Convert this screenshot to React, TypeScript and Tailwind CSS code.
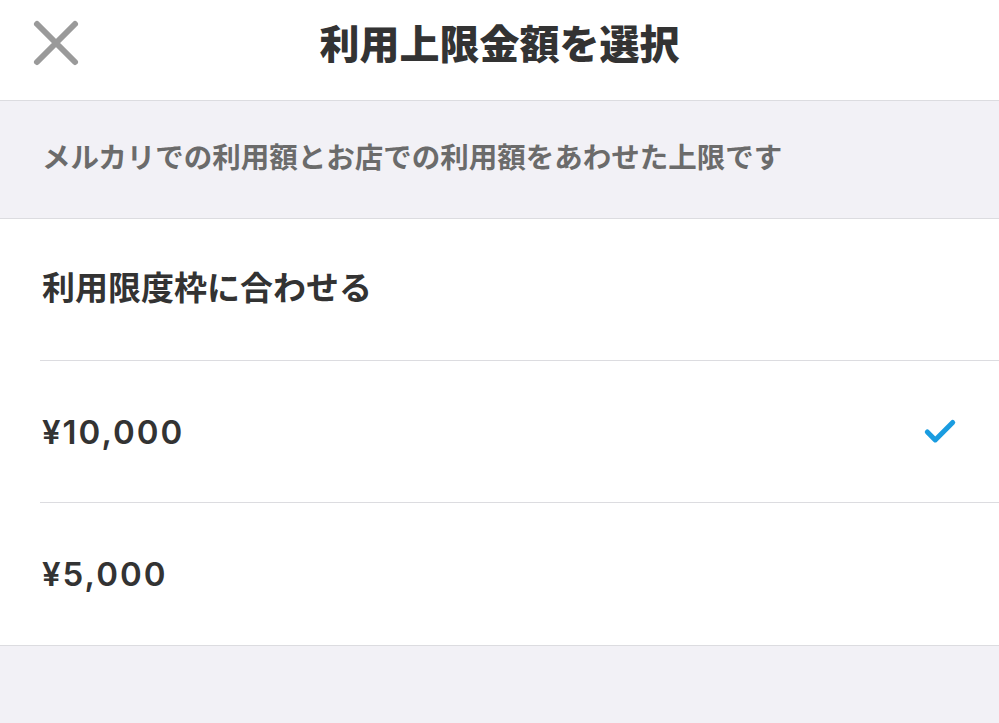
import { Check } from "lucide-react";

const options = [
  { label: "利用限度枠に合わせる", selected: false, latin: false },
  { label: "¥10,000", selected: true, latin: true },
  { label: "¥5,000", selected: false, latin: true },
];

const font = "font-['Inter','Noto_Sans_CJK_JP',sans-serif]";

export default function App() {
  return (
    <div className={`w-[999px] h-[723px] bg-[#f2f1f6] flex flex-col ${font}`}>
      {/* Header */}
      <header className="relative h-[101px] bg-white border-b border-[#dcdce0] flex items-center justify-center">
        <button className="absolute left-[30px] top-[17px] w-[52px] h-[52px] flex items-center justify-center">
          <svg width="50" height="50" viewBox="0 0 50 50">
            <path d="M6 6 L44 44 M44 6 L6 44" stroke="#9a9a9a" strokeWidth="6" strokeLinecap="round" />
          </svg>
        </button>
        <h1 className="text-[40px] font-black text-[#333] -mt-[10px] leading-none">利用上限金額を選択</h1>
      </header>

      {/* Note */}
      <div className="h-[118px] flex items-center px-[42px] border-b border-[#dcdce0]">
        <p className="text-[28.5px] font-semibold text-[#6b6b6b] -mt-[2px] whitespace-nowrap">
          メルカリでの利用額とお店での利用額をあわせた上限です
        </p>
      </div>

      {/* Options */}
      <ul className="bg-white border-b border-[#dcdce0] pl-[40px]">
        {options.map((opt, i) => (
          <li
            key={opt.label}
            className={`h-[142px] flex items-center justify-between pr-[40px] ${
              i < options.length - 1 ? "border-b border-[#dcdce0]" : ""
            }`}
          >
            <span
              className={`text-[33px] font-semibold text-[#333] pl-[2px] ${
                opt.latin ? "tracking-[2px] mt-[2px]" : "-mt-[2px]"
              }`}
            >
              {opt.label}
            </span>
            {opt.selected && <Check className="w-[38px] h-[38px] text-[#1a9ce0]" strokeWidth={3.2} />}
          </li>
        ))}
      </ul>
    </div>
  );
}
